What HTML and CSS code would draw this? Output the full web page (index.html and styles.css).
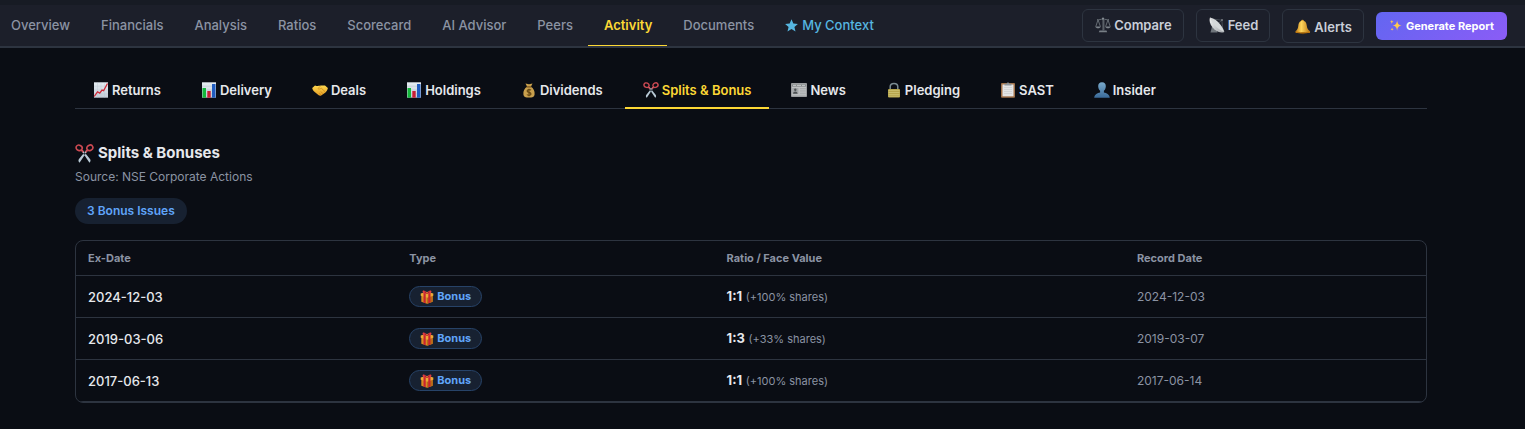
FILE: index.html
```html
<!DOCTYPE html>
<html lang="en">
<head>
    <meta charset="UTF-8">
    <meta name="viewport" content="width=device-width, initial-scale=1.0">
    <title>Splits &amp; Bonuses</title>
    <link rel="stylesheet" href="styles.css">
</head>
<body>
    <!-- Icon sprite -->
    <svg class="sprite" aria-hidden="true">
        <defs>
            <linearGradient id="paper" x1="0" y1="0" x2="0" y2="1">
                <stop offset="0" stop-color="#e6edf3"/><stop offset="1" stop-color="#c3ccd6"/>
            </linearGradient>
            <linearGradient id="gold" x1="0" y1="0" x2="0" y2="1">
                <stop offset="0" stop-color="#ffd84f"/><stop offset="1" stop-color="#e39b23"/>
            </linearGradient>
            <linearGradient id="bell-gold" x1="0" y1="0" x2="1" y2="0">
                <stop offset="0" stop-color="#c07a12"/><stop offset="0.4" stop-color="#ffd65c"/><stop offset="1" stop-color="#b87312"/>
            </linearGradient>
            <linearGradient id="person-blue" x1="0" y1="0" x2="0" y2="1">
                <stop offset="0" stop-color="#79a9cb"/><stop offset="1" stop-color="#3a6a99"/>
            </linearGradient>
            <linearGradient id="dish-grey" x1="0" y1="0" x2="1" y2="1">
                <stop offset="0" stop-color="#f2f3f4"/><stop offset="1" stop-color="#a5a9ad"/>
            </linearGradient>
        </defs>
        <symbol id="i-scale" viewBox="0 0 16 16">
            <g fill="none" stroke="#767d84" stroke-width="0.8">
                <path d="M8 1v12.5M2 2.6c2 .8 4-.8 6-.4 2-.4 4 1.200 6 .4M3 2.800.8 9.500M3 2.800l2.400 6.700M13 2.800l-2.400 6.700M13 2.800l2.200 6.700"/>
                <path d="M8.900 3v10"/>
            </g>
            <path d="M.3 9.400h5.500c-.4 2.400-5.100 2.400-5.500 0zM10.200 9.400h5.500c-.4 2.400-5.100 2.400-5.500 0z" fill="#7d848b"/>
            <path d="M4.500 13.500h7l.7 1.800H3.800z" fill="#777e85"/>
            <circle cx="8" cy="1.500" r="1" fill="#8b9299"/>
        </symbol>
        <symbol id="i-dish" viewBox="0 0 16 16">
            <path d="M3 9.500 1.500 15.500h7L7 11z" fill="#6f757b"/>
            <path d="M7.500 8 12.800 3.200M3 2l9.800 1.200 1 10" fill="none" stroke="#62686e" stroke-width="0.6"/>
            <path d="M1 .5C-.3 4 1.500 9 5.500 12.500c3.500 3 7.500 3.500 9.800 2.400z" fill="url(#dish-grey)"/>
            <path d="M1 .5c4 .8 8 3.700 10.500 7.200 2 2.800 3.500 5.300 3.800 7.200C10 13 3 7 1 .5z" fill="#d5d8da"/>
            <circle cx="13" cy="3" r="1" fill="#777d83"/>
        </symbol>
        <symbol id="i-bell" viewBox="0 0 16 16">
            <circle cx="7.500" cy="2" r="1.300" fill="#d79a2a"/>
            <path d="M7.500 1.800c3 0 4 2.200 4.300 5 .3 2.700 1 3.700 3 5.200.6.500.4 1.700-.5 2H1.200c-.9-.3-1-1.500-.4-2 1.700-1.500 2.200-2.500 2.500-5.200.3-2.800 1.400-5 4.200-5z" fill="url(#bell-gold)"/>
            <path d="M.8 12.300c4 1.300 10 1.300 14 0l-.2 1.500c-4 1-9.800 1-13.600 0z" fill="#b8730e"/>
            <path d="M6.200 13.800h3.600c-.2 1.800-3.400 1.800-3.600 0z" fill="#7c4c0a"/>
        </symbol>
        <symbol id="i-sparkles" viewBox="0 0 16 16">
            <path d="M10 1.500c.5 4 1.600 5.800 5.500 6.500-3.900.7-5 2.500-5.500 6.500-.5-4-1.600-5.800-5.500-6.500 3.900-.7 5-2.500 5.500-6.500zM3.500 1c.3 1.700.7 2.200 2.300 2.500-1.600.3-2 .8-2.300 2.500-.3-1.700-.7-2.200-2.300-2.500C2.800 3.200 3.200 2.700 3.500 1zM3.800 10.500c.2 1.400.6 1.800 2 2-1.400.2-1.800.7-2 2-.2-1.300-.6-1.800-2-2 1.400-.2 1.800-.6 2-2z" fill="#ffc94f"/>
        </symbol>
        <symbol id="i-returns" viewBox="0 0 16 16">
            <path d="M1 .3h14v15.400H1z" fill="url(#paper)"/>
            <path d="M1 4.200h14M1 8h14M1 11.800h14M4.500.3v15.400M8 .3v15.400M11.500.3v15.400" stroke="#b3c0cd" stroke-width="0.3"/>
            <path d="M1.200 14.500 4.500 9.800l2.200 1.300L9 8l1.600.7L14.500 1.500" fill="none" stroke="#cf2735" stroke-width="1.300"/>
        </symbol>
        <symbol id="i-bars" viewBox="0 0 16 16">
            <path d="M1 .3h14v15.400H1z" fill="url(#paper)"/>
            <path d="M1 4.200h14M1 8h14M1 11.800h14" stroke="#a9b8c8" stroke-width="0.4"/>
            <path d="M1.500 6H5v9.700H1.500z" fill="#14b83c"/>
            <path d="M6.300 9h3.400v6.700H6.300z" fill="#c91f35"/>
            <path d="M11 2h3.500v13.700H11z" fill="#205cc0"/>
        </symbol>
        <symbol id="i-handshake" viewBox="0 0 16 16">
            <path d="M.2 6 3 3.400c1.600.6 3 .7 4.500.4L9 3.500l4 .1L15.900 6c-.2 1.800-1.500 3.700-3.100 5l-3.600 2.500c-.8.5-1.900.3-2.500-.2L3 10.200C1.400 9 .4 7.500.2 6z" fill="url(#gold)"/>
            <path d="M8.500 4 6 6.500c.8 1 2.200.5 3.200-.4l4 3.700M10.800 11.500 8.600 9.500M9 12.800l-1.800-1.700" fill="none" stroke="#bd7914" stroke-width="0.6"/>
        </symbol>
        <symbol id="i-moneybag" viewBox="0 0 16 16">
            <path d="M4.500 1.500 8 2.300l3.500-.8-1.600 3.200c2.600 1.500 4.100 4.300 3.700 7.700-.3 2.300-2 3.200-5.600 3.200s-5.300-.9-5.600-3.200c-.4-3.400 1.100-6.200 3.700-7.700z" fill="#c9a04d"/>
            <path d="M5.600 4.300h4.800v1.200H5.600z" fill="#74511e"/>
            <path d="M10 8.200c-1-1-3.900-.9-3.900.8 0 1.900 3.900.9 3.900 2.900 0 1.700-3 1.800-4.100.6M8 6.700v7.600" fill="none" stroke="#60420f" stroke-width="1.100"/>
        </symbol>
        <symbol id="i-scissors" viewBox="0 0 16 16">
            <path d="M5 5 12.200 15.800c1-.9 1.100-1.900.6-2.900L6.500 5zM11 5 3.800 15.800c-1-.9-1.100-1.900-.6-2.900L9.500 5z" fill="#b9cad6"/>
            <g fill="none" stroke="#cd4a53" stroke-width="1.400">
                <ellipse cx="3.500" cy="3.200" rx="2.600" ry="2.200" transform="rotate(25 3.500 3.200)"/>
                <ellipse cx="12.500" cy="3.200" rx="2.600" ry="2.200" transform="rotate(-25 12.500 3.200)"/>
                <path d="m5.400 5 1.600 1.800M10.600 5 9 6.800"/>
            </g>
            <circle cx="8" cy="8.700" r="0.600" fill="#56636d"/>
        </symbol>
        <symbol id="i-news" viewBox="0 0 16 16">
            <path d="M.2 1.200h15.600v13.600H.2z" fill="#c0c2c3"/>
            <path d="M1 2.200h14v2.500H1z" fill="#888c8e"/>
            <path d="M2 3.400h3M6 3.400h4M11 3.400h3" stroke="#d6d8d9" stroke-width="0.800"/>
            <path d="M1.200 6h6.300v5.800H1.200z" fill="#a3a6a8"/>
            <circle cx="4.300" cy="7.800" r="1.200" fill="#4d5153"/>
            <path d="M2 11.800c.2-3.200 4.400-3.200 4.600 0z" fill="#4d5153"/>
            <path d="M8.800 6.500h6M8.800 8.200h6M8.800 9.900h6M8.800 11.600h6M1.200 13.300h13.600" stroke="#989c9e" stroke-width="0.600"/>
        </symbol>
        <symbol id="i-lock" viewBox="0 0 16 16">
            <path d="M4.200 8V4.700C4.200.3 11.800.3 11.800 4.700V8" fill="none" stroke="#7b8b91" stroke-width="1.500"/>
            <rect x="2" y="7" width="12" height="8.500" rx="1" fill="#b4a34a"/>
            <path d="M2.500 8.600h11M2.500 10.500h11M2.500 12.400h11M2.500 14.200h11" stroke="#d3ca7c" stroke-width="0.700"/>
        </symbol>
        <symbol id="i-clipboard" viewBox="0 0 16 16">
            <rect x="1" y="1" width="14" height="14.700" rx="1" fill="#a1724a"/>
            <path d="M2.500 2.500h11v11.800h-11z" fill="#e4e5e6"/>
            <path d="M4 5.500h8M4 7.500h8M4 9.500h8M4 11.500h8" stroke="#c2c4c6" stroke-width="0.500"/>
            <path d="M4.500 3.500V1.700h2.200C7 0 9 0 9.300 1.700h2.200v1.800z" fill="#8d9499"/>
        </symbol>
        <symbol id="i-person" viewBox="0 0 16 16">
            <path d="M8 .3c2.700 0 4 1.700 3.800 4.300-.1 1.900-.8 3.300-1.900 4.100v1.700c2.600.7 5.500 1.500 5.900 5.300H.2c.4-3.800 3.300-4.600 5.900-5.300V8.700C5 7.900 4.300 6.500 4.200 4.600 4 2 5.300.3 8 .3z" fill="url(#person-blue)"/>
        </symbol>
        <symbol id="i-gift" viewBox="0 0 16 16">
            <path d="M1.500 6 8 8.200 14.500 6v7.300L8 15.800l-6.500-2.500z" fill="#d98b22"/>
            <path d="M8 8.200 14.500 6v7.300L8 15.800z" fill="#b96b17"/>
            <path d="M.8 4 8 2l7.200 2v2.700L8 8.900.8 6.700z" fill="#edaa36"/>
            <path d="m4 3.100 2.500-.6v12.700L4 14.300zM12 3.100l-2.500-.6v12.700l2.500-.9z" fill="#c92430"/>
            <path d="M8 4C6.500 0 2.500-.3 3 2.200c.2 1.200 2.500 2 5 1.800zM8 4c1.500-4 5.500-4.300 5-1.800C12.800 3.400 10.500 4.200 8 4z" fill="#e33c42"/>
            <path d="M5 2.200 8 4l3-1.800" fill="none" stroke="#8e1520" stroke-width="0.800"/>
        </symbol>
    </svg>

    <header class="topbar">
        <nav class="nav-links">
            <a href="#overview">Overview</a>
            <a href="#financials">Financials</a>
            <a href="#analysis">Analysis</a>
            <a href="#ratios">Ratios</a>
            <a href="#scorecard">Scorecard</a>
            <a href="#advisor">AI Advisor</a>
            <a href="#peers">Peers</a>
            <a href="#activity" class="active">Activity</a>
            <a href="#documents">Documents</a>
            <a href="#context" class="my-context"><svg class="star" viewBox="0 0 12 12" aria-hidden="true"><path d="m6 .2 1.700 3.900 4.200.4-3.200 2.800 1 4.200L6 9.300l-3.700 2.200 1-4.200L.1 4.500l4.200-.4z" fill="currentColor"/></svg>My Context</a>
        </nav>
        <div class="actions">
            <button type="button" class="btn"><svg class="icon"><use href="#i-scale"/></svg>Compare</button>
            <button type="button" class="btn"><svg class="icon"><use href="#i-dish"/></svg>Feed</button>
            <button type="button" class="btn btn-alerts"><svg class="icon"><use href="#i-bell"/></svg>Alerts</button>
            <button type="button" class="btn-generate"><svg class="icon"><use href="#i-sparkles"/></svg>Generate Report</button>
        </div>
    </header>

    <main class="content">
        <div class="tabs" role="tablist">
            <button type="button" role="tab" class="tab"><svg class="icon"><use href="#i-returns"/></svg>Returns</button>
            <button type="button" role="tab" class="tab"><svg class="icon"><use href="#i-bars"/></svg>Delivery</button>
            <button type="button" role="tab" class="tab"><svg class="icon"><use href="#i-handshake"/></svg>Deals</button>
            <button type="button" role="tab" class="tab"><svg class="icon"><use href="#i-bars"/></svg>Holdings</button>
            <button type="button" role="tab" class="tab"><svg class="icon"><use href="#i-moneybag"/></svg>Dividends</button>
            <button type="button" role="tab" class="tab active" aria-selected="true"><svg class="icon"><use href="#i-scissors"/></svg>Splits &amp; Bonus</button>
            <button type="button" role="tab" class="tab"><svg class="icon"><use href="#i-news"/></svg>News</button>
            <button type="button" role="tab" class="tab"><svg class="icon"><use href="#i-lock"/></svg>Pledging</button>
            <button type="button" role="tab" class="tab"><svg class="icon"><use href="#i-clipboard"/></svg>SAST</button>
            <button type="button" role="tab" class="tab"><svg class="icon"><use href="#i-person"/></svg>Insider</button>
        </div>

        <section class="splits">
            <h2><svg class="icon"><use href="#i-scissors"/></svg>Splits &amp; Bonuses</h2>
            <p class="source">Source: NSE Corporate Actions</p>
            <span class="summary">3 Bonus Issues</span>

            <div class="table-wrap">
                <table>
                    <thead>
                        <tr>
                            <th class="col-date">Ex-Date</th>
                            <th class="col-type">Type</th>
                            <th class="col-ratio">Ratio / Face Value</th>
                            <th>Record Date</th>
                        </tr>
                    </thead>
                    <tbody>
                        <tr>
                            <td class="ex-date">2024-12-03</td>
                            <td><span class="pill"><svg class="icon"><use href="#i-gift"/></svg>Bonus</span></td>
                            <td><strong>1:1</strong> <small>(+100% shares)</small></td>
                            <td class="record">2024-12-03</td>
                        </tr>
                        <tr>
                            <td class="ex-date">2019-03-06</td>
                            <td><span class="pill"><svg class="icon"><use href="#i-gift"/></svg>Bonus</span></td>
                            <td><strong>1:3</strong> <small>(+33% shares)</small></td>
                            <td class="record">2019-03-07</td>
                        </tr>
                        <tr>
                            <td class="ex-date">2017-06-13</td>
                            <td><span class="pill"><svg class="icon"><use href="#i-gift"/></svg>Bonus</span></td>
                            <td><strong>1:1</strong> <small>(+100% shares)</small></td>
                            <td class="record">2017-06-14</td>
                        </tr>
                    </tbody>
                </table>
            </div>
        </section>
    </main>
</body>
</html>
```

FILE: styles.css
```css
:root {
    --bg: #0a0d14;
    --bar: #1c1f2a;
    --border: #2d3440;
    --text: #e6e8ec;
    --muted: #8b93a3;
    --yellow: #fdd835;
    --blue: #60a5fa;
    --blue-bg: #172131;
}

* {
    box-sizing: border-box;
    margin: 0;
    padding: 0;
}

body {
    background-color: var(--bg);
    color: var(--text);
    font-family: Inter, sans-serif;
    font-size: 13px;
    line-height: 20px;
}

button {
    font-family: inherit;
    cursor: pointer;
}

.sprite {
    position: absolute;
    width: 0;
    height: 0;
}

.icon {
    width: 16px;
    height: 16px;
    flex: none;
}

/* Top bar */
.topbar {
    display: flex;
    justify-content: space-between;
    height: 48px;
    padding-right: 18px;
    background: linear-gradient(#171b24 5px, var(--bar) 5px);
    border-bottom: 2px solid var(--border);
}

.nav-links {
    display: flex;
    margin-left: -5px;
}

.nav-links a {
    display: flex;
    align-items: center;
    padding: 5px 15px 0 16px;
    color: var(--muted);
    font-weight: 500;
    text-decoration: none;
    white-space: nowrap;
    border-bottom: 1px solid transparent;
}

.nav-links a.active {
    color: var(--yellow);
    font-weight: 600;
    border-bottom-color: var(--yellow);
}

.nav-links a.my-context {
    gap: 4px;
    color: #56b6e0;
}

.star {
    width: 13px;
    height: 13px;
}

.actions {
    display: flex;
    align-items: center;
    gap: 12px;
    padding-top: 5px;
}

.btn {
    display: flex;
    align-items: center;
    gap: 3px;
    padding: 5px 11px 6px 12px;
    background: transparent;
    border: 1px solid var(--border);
    border-radius: 6px;
    color: #c9ced8;
    font-size: 13px;
    font-weight: 600;
    line-height: 20px;
}

.btn-alerts {
    padding-top: 7px;
    padding-bottom: 5px;
}

.btn-generate {
    display: flex;
    align-items: center;
    gap: 4px;
    padding: 4px 13px;
    background: linear-gradient(135deg, #6366f1, #8b5cf6);
    border: none;
    border-radius: 6px;
    color: #ffffff;
    font-size: 11px;
    font-weight: 700;
    line-height: 20px;
}

.btn-generate .icon {
    width: 13px;
    height: 13px;
}

/* Section tabs */
.content {
    padding: 24px 98px 24px 75px;
}

.tabs {
    display: flex;
    gap: 4px;
    border-bottom: 1px solid var(--border);
}

.tab {
    display: flex;
    align-items: center;
    gap: 3px;
    margin-bottom: -1px;
    padding: 8px 18px 7px;
    background: none;
    border: none;
    border-bottom: 2px solid transparent;
    color: var(--text);
    font-size: 13px;
    font-weight: 600;
    line-height: 20px;
}

.tab.active {
    color: var(--yellow);
    border-bottom-color: var(--yellow);
}

/* Splits & bonuses */
.splits {
    padding-top: 32px;
}

h2 {
    display: flex;
    align-items: center;
    gap: 4px;
    font-size: 15px;
    font-weight: 700;
    line-height: 24px;
}

h2 .icon {
    width: 19px;
    height: 19px;
}

.source {
    margin-top: 2px;
    color: var(--muted);
    font-size: 12px;
}

.summary {
    display: inline-block;
    margin-top: 11px;
    padding: 3px 12px;
    background-color: var(--blue-bg);
    border-radius: 13px;
    color: var(--blue);
    font-size: 12px;
    font-weight: 600;
}

.table-wrap {
    margin-top: 16px;
    border: 1px solid var(--border);
    border-radius: 8px;
    overflow: hidden;
}

table {
    width: 100%;
    table-layout: fixed;
    border-collapse: separate;
    border-spacing: 0;
}

th,
td {
    padding: 0 12px;
    border-bottom: 1px solid var(--border);
    text-align: left;
}

th {
    height: 35px;
    color: var(--muted);
    font-size: 11px;
    font-weight: 700;
}

td {
    height: 42px;
}

.col-date {
    width: 23.8%;
}

.col-type {
    width: 23.5%;
}

.col-ratio {
    width: 30.4%;
}

.ex-date {
    font-weight: 500;
}

.record,
small {
    color: var(--muted);
}

.record {
    font-size: 12px;
}

small {
    font-size: 11px;
}

.pill {
    display: inline-flex;
    align-items: center;
    gap: 3px;
    padding: 0 10px;
    background-color: var(--blue-bg);
    border: 1px solid #274368;
    border-radius: 11px;
    color: var(--blue);
    font-size: 11px;
    font-weight: 700;
    line-height: 19px;
    vertical-align: middle;
}

.pill .icon {
    width: 14px;
    height: 14px;
}
```
